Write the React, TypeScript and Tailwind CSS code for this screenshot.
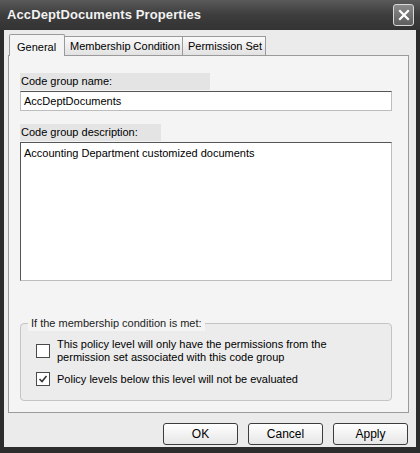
import React from 'react';

const font = { fontFamily: '"Liberation Sans", Arial, sans-serif' };

function Checkbox({ checked }: { checked?: boolean }) {
  return (
    <div className="w-[14px] h-[14px] border border-[#4a4a4a] bg-white flex items-center justify-center shrink-0">
      {checked && (
        <svg width="10" height="10" viewBox="0 0 10 10">
          <path d="M1.5 5 L4 7.5 L8.5 2" fill="none" stroke="#333" strokeWidth="1.6" />
        </svg>
      )}
    </div>
  );
}

function Button({ label }: { label: string }) {
  return (
    <button className="w-[75px] h-[22px] rounded-[3px] border border-[#3c3c3c] bg-gradient-to-b from-white to-[#e6e6e6] text-[12px] text-black flex items-center justify-center">
      {label}
    </button>
  );
}

export default function App() {
  return (
    <div className="w-[420px] h-[453px] bg-[#2c2c2c] flex flex-col overflow-hidden" style={font}>
      {/* Title bar */}
      <div className="h-[30px] shrink-0 flex items-center justify-between pl-[7px] pr-[6px] bg-gradient-to-b from-[#5a5a5a] via-[#3d3d3d] to-[#333]">
        <span className="text-[13px] font-bold text-[#f2f2f2] tracking-[0.1px]">AccDeptDocuments Properties</span>
        <div className="w-[21px] h-[22px] rounded-[3px] border border-[#d8d8d8] bg-gradient-to-b from-[#8a8a8a] to-[#5e5e5e] flex items-center justify-center">
          <svg width="12" height="12" viewBox="0 0 12 12">
            <path d="M2 2 L10 10 M10 2 L2 10" stroke="#fff" strokeWidth="2.2" strokeLinecap="square" />
          </svg>
        </div>
      </div>

      {/* Body */}
      <div className="flex-1 mx-[4px] mb-[6px] bg-[#ebebeb] flex flex-col px-[4px] pt-[3px]">
        {/* Tabs */}
        <div className="flex items-end h-[22px] pl-[1px] relative z-10 whitespace-nowrap">
          <div className="h-[22px] w-[56px] border border-b-0 border-[#9a9a9a] bg-[#f4f4f4] rounded-t-[2px] text-[11px] flex items-start pt-[4px] pl-[7px] -mb-px">
            General
          </div>
          <div className="h-[19px] w-[118px] border border-b-0 border-l-0 border-[#9a9a9a] bg-gradient-to-b from-[#fafafa] to-[#e2e2e2] text-[11px] flex items-center pl-[5px]">
            Membership Condition
          </div>
          <div className="h-[19px] w-[83px] border border-b-0 border-l-0 border-[#9a9a9a] bg-gradient-to-b from-[#fafafa] to-[#e2e2e2] text-[11px] flex items-center pl-[5px]">
            Permission Set
          </div>
        </div>

        {/* Panel */}
        <div className="h-[358px] border border-[#9a9a9a] bg-[#f4f4f4] mr-[3px] px-[11px] pt-[17px] flex flex-col">
          <div className="w-[190px] h-[17px] bg-[#e4e4e4] text-[11px] leading-[17px] pl-[1px]">Code group name:</div>
          <div className="mt-[1px] w-[372px] h-[20px] bg-white border border-[#bdbdbd] border-t-[#555] text-[11px] leading-[18px] pl-[3px]">
            AccDeptDocuments
          </div>
          <div className="mt-[13px] w-[141px] h-[17px] bg-[#e4e4e4] text-[11px] leading-[17px] pl-[1px]">Code group description:</div>
          <div className="mt-[1px] w-[372px] h-[139px] bg-white border border-[#bdbdbd] border-t-[#555] border-l-[#555] text-[11px] leading-[16px] pl-[3px] pt-[2px]">
            Accounting Department customized documents
          </div>

          {/* Group box */}
          <div className="mt-[42px] w-[372px] h-[78px] relative border border-[#c4c4c4] rounded-[4px] bg-[#ececec] pt-[14px] pl-[15px]">
            <span className="absolute -top-[8px] left-[7px] px-[3px] bg-[#f4f4f4] text-[11px] leading-[15px] text-[#222]">
              If the membership condition is met:
            </span>
            <div className="flex items-center gap-[7px]">
              <Checkbox />
              <div className="text-[11px] leading-[13px]">
                This policy level will only have the permissions from the
                <br />
                permission set associated with this code group
              </div>
            </div>
            <div className="flex items-center gap-[7px] mt-[8px]">
              <Checkbox checked />
              <div className="text-[11px] leading-[14px]">Policy levels below this level will not be evaluated</div>
            </div>
          </div>
        </div>

        {/* Buttons */}
        <div className="flex justify-end gap-[10px] mt-[10px] pr-[4px]">
          <Button label="OK" />
          <Button label="Cancel" />
          <Button label="Apply" />
        </div>
      </div>
    </div>
  );
}
